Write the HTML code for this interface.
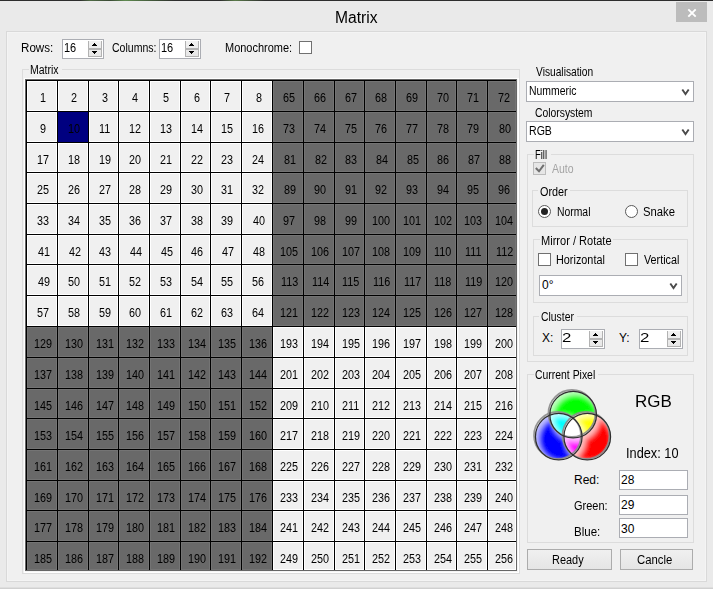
<!DOCTYPE html>
<html><head><meta charset="utf-8"><style>
html,body{margin:0;padding:0;}
body{width:713px;height:589px;overflow:hidden;position:relative;background:#eaeaea;font-family:"Liberation Sans",sans-serif;}
body>div{position:absolute;}
.t{position:absolute;white-space:nowrap;transform-origin:0 0;}
.c{position:absolute;box-sizing:border-box;}
</style></head><body>
<div style="left:0px;top:0px;width:713px;height:1px;background:linear-gradient(90deg,#2e2e2e 0,#2e2e2e 80px,#4f6a45 90px,#3a4a35 110px,#5f8a50 125px,#3a4a35 160px,#2e2e2e 175px,#2e2e2e 220px,#5a7a4a 235px,#2e2e2e 265px,#2e2e2e 100%)"></div><div style="left:676px;top:2px;width:31px;height:20px;background:#bcbcbc"></div><div style="left:6px;top:31px;width:701px;height:551px;border:1px solid #d9d9d9;box-sizing:border-box;background:#f0f0f0;"></div><div style="left:7px;top:32px;width:699px;height:549px;border:1px solid #f4f4f4;box-sizing:border-box;"></div><div style="left:0px;top:588px;width:713px;height:1px;background:#d0d0d0"></div><div style="left:0px;top:587px;width:713px;height:1px;background:#dedede"></div><div style="left:62px;top:39px;width:42px;height:20px;border:1px solid #abadb3;box-sizing:border-box;background:#fff;"></div><div style="left:88px;top:41px;width:14px;height:16px;background:linear-gradient(#f2f2f2,#e6e6e6);border:1px solid #b2b2b2;border-top:none;box-sizing:border-box"></div><div style="left:88px;top:48px;width:14px;height:2px;background:#b4b4b4"></div><div style="left:94px;top:43px;width:1px;height:1px;background:#000"></div><div style="left:93px;top:44px;width:3px;height:1px;background:#000"></div><div style="left:92px;top:45px;width:5px;height:1px;background:#000"></div><div style="left:92px;top:51px;width:5px;height:1px;background:#000"></div><div style="left:93px;top:52px;width:3px;height:1px;background:#000"></div><div style="left:94px;top:53px;width:1px;height:1px;background:#000"></div><div style="left:159px;top:39px;width:42px;height:20px;border:1px solid #abadb3;box-sizing:border-box;background:#fff;"></div><div style="left:185px;top:41px;width:14px;height:16px;background:linear-gradient(#f2f2f2,#e6e6e6);border:1px solid #b2b2b2;border-top:none;box-sizing:border-box"></div><div style="left:185px;top:48px;width:14px;height:2px;background:#b4b4b4"></div><div style="left:191px;top:43px;width:1px;height:1px;background:#000"></div><div style="left:190px;top:44px;width:3px;height:1px;background:#000"></div><div style="left:189px;top:45px;width:5px;height:1px;background:#000"></div><div style="left:189px;top:51px;width:5px;height:1px;background:#000"></div><div style="left:190px;top:52px;width:3px;height:1px;background:#000"></div><div style="left:191px;top:53px;width:1px;height:1px;background:#000"></div><div style="left:299px;top:41px;width:13px;height:13px;border:1px solid #707070;box-sizing:border-box;background:#fff;"></div><div style="left:22px;top:69px;width:498px;height:505px;border:1px solid #dcdcdc;box-sizing:border-box;"></div><div style="left:29px;top:69px;width:33px;height:1px;background:#f0f0f0"></div><div style="left:24px;top:78px;width:495px;height:495px;background:#fff"></div><div style="left:517px;top:79px;width:1px;height:493px;background:#f4f4f4"></div><div style="left:25px;top:571px;width:493px;height:1px;background:#f4f4f4"></div><div style="left:25px;top:79px;width:492px;height:492px;overflow:hidden"><div class="c" style="left:2px;top:2px;width:30px;height:30px;background:#f0f0f0;border:1px solid #ffffff"></div><span class="t" style="left:15.35px;top:13.00px;font-size:12px;line-height:12px;transform:scaleX(0.9)">1</span><div class="c" style="left:33px;top:2px;width:30px;height:30px;background:#f0f0f0;border:1px solid #ffffff"></div><span class="t" style="left:46.35px;top:13.00px;font-size:12px;line-height:12px;transform:scaleX(0.9)">2</span><div class="c" style="left:64px;top:2px;width:29px;height:30px;background:#f0f0f0;border:1px solid #ffffff"></div><span class="t" style="left:76.85px;top:13.00px;font-size:12px;line-height:12px;transform:scaleX(0.9)">3</span><div class="c" style="left:94px;top:2px;width:30px;height:30px;background:#f0f0f0;border:1px solid #ffffff"></div><span class="t" style="left:107.35px;top:13.00px;font-size:12px;line-height:12px;transform:scaleX(0.9)">4</span><div class="c" style="left:125px;top:2px;width:30px;height:30px;background:#f0f0f0;border:1px solid #ffffff"></div><span class="t" style="left:138.35px;top:13.00px;font-size:12px;line-height:12px;transform:scaleX(0.9)">5</span><div class="c" style="left:156px;top:2px;width:29px;height:30px;background:#f0f0f0;border:1px solid #ffffff"></div><span class="t" style="left:168.85px;top:13.00px;font-size:12px;line-height:12px;transform:scaleX(0.9)">6</span><div class="c" style="left:186px;top:2px;width:30px;height:30px;background:#f0f0f0;border:1px solid #ffffff"></div><span class="t" style="left:199.35px;top:13.00px;font-size:12px;line-height:12px;transform:scaleX(0.9)">7</span><div class="c" style="left:217px;top:2px;width:30px;height:30px;background:#f0f0f0;border:1px solid #ffffff"></div><span class="t" style="left:230.80px;top:13.00px;font-size:12px;line-height:12px;transform:scaleX(0.9)">8</span><div class="c" style="left:248px;top:2px;width:30px;height:30px;background:#696969;border:1px solid #747474"></div><span class="t" style="left:258.20px;top:13.00px;font-size:12px;line-height:12px;transform:scaleX(0.9)">65</span><div class="c" style="left:279px;top:2px;width:30px;height:30px;background:#696969;border:1px solid #747474"></div><span class="t" style="left:289.20px;top:13.00px;font-size:12px;line-height:12px;transform:scaleX(0.9)">66</span><div class="c" style="left:310px;top:2px;width:29px;height:30px;background:#696969;border:1px solid #747474"></div><span class="t" style="left:319.70px;top:13.00px;font-size:12px;line-height:12px;transform:scaleX(0.9)">67</span><div class="c" style="left:340px;top:2px;width:30px;height:30px;background:#696969;border:1px solid #747474"></div><span class="t" style="left:350.20px;top:13.00px;font-size:12px;line-height:12px;transform:scaleX(0.9)">68</span><div class="c" style="left:371px;top:2px;width:30px;height:30px;background:#696969;border:1px solid #747474"></div><span class="t" style="left:381.20px;top:13.00px;font-size:12px;line-height:12px;transform:scaleX(0.9)">69</span><div class="c" style="left:402px;top:2px;width:29px;height:30px;background:#696969;border:1px solid #747474"></div><span class="t" style="left:411.70px;top:13.00px;font-size:12px;line-height:12px;transform:scaleX(0.9)">70</span><div class="c" style="left:432px;top:2px;width:30px;height:30px;background:#696969;border:1px solid #747474"></div><span class="t" style="left:442.20px;top:13.00px;font-size:12px;line-height:12px;transform:scaleX(0.9)">71</span><div class="c" style="left:463px;top:2px;width:28px;height:30px;background:#696969;border:1px solid #747474"></div><span class="t" style="left:473.20px;top:13.00px;font-size:12px;line-height:12px;transform:scaleX(0.9)">72</span><div class="c" style="left:2px;top:33px;width:30px;height:30px;background:#f0f0f0;border:1px solid #ffffff"></div><span class="t" style="left:15.35px;top:44.00px;font-size:12px;line-height:12px;transform:scaleX(0.9)">9</span><div class="c" style="left:33px;top:33px;width:30px;height:30px;background:#000080;border:1px solid #000080"></div><span class="t" style="left:43.20px;top:44.00px;font-size:12px;line-height:12px;transform:scaleX(0.9)">10</span><div class="c" style="left:64px;top:33px;width:29px;height:30px;background:#f0f0f0;border:1px solid #ffffff"></div><span class="t" style="left:74.15px;top:44.00px;font-size:12px;line-height:12px;transform:scaleX(0.9)">11</span><div class="c" style="left:94px;top:33px;width:30px;height:30px;background:#f0f0f0;border:1px solid #ffffff"></div><span class="t" style="left:104.20px;top:44.00px;font-size:12px;line-height:12px;transform:scaleX(0.9)">12</span><div class="c" style="left:125px;top:33px;width:30px;height:30px;background:#f0f0f0;border:1px solid #ffffff"></div><span class="t" style="left:135.20px;top:44.00px;font-size:12px;line-height:12px;transform:scaleX(0.9)">13</span><div class="c" style="left:156px;top:33px;width:29px;height:30px;background:#f0f0f0;border:1px solid #ffffff"></div><span class="t" style="left:165.70px;top:44.00px;font-size:12px;line-height:12px;transform:scaleX(0.9)">14</span><div class="c" style="left:186px;top:33px;width:30px;height:30px;background:#f0f0f0;border:1px solid #ffffff"></div><span class="t" style="left:196.20px;top:44.00px;font-size:12px;line-height:12px;transform:scaleX(0.9)">15</span><div class="c" style="left:217px;top:33px;width:30px;height:30px;background:#f0f0f0;border:1px solid #ffffff"></div><span class="t" style="left:227.20px;top:44.00px;font-size:12px;line-height:12px;transform:scaleX(0.9)">16</span><div class="c" style="left:248px;top:33px;width:30px;height:30px;background:#696969;border:1px solid #747474"></div><span class="t" style="left:258.20px;top:44.00px;font-size:12px;line-height:12px;transform:scaleX(0.9)">73</span><div class="c" style="left:279px;top:33px;width:30px;height:30px;background:#696969;border:1px solid #747474"></div><span class="t" style="left:289.20px;top:44.00px;font-size:12px;line-height:12px;transform:scaleX(0.9)">74</span><div class="c" style="left:310px;top:33px;width:29px;height:30px;background:#696969;border:1px solid #747474"></div><span class="t" style="left:319.70px;top:44.00px;font-size:12px;line-height:12px;transform:scaleX(0.9)">75</span><div class="c" style="left:340px;top:33px;width:30px;height:30px;background:#696969;border:1px solid #747474"></div><span class="t" style="left:350.20px;top:44.00px;font-size:12px;line-height:12px;transform:scaleX(0.9)">76</span><div class="c" style="left:371px;top:33px;width:30px;height:30px;background:#696969;border:1px solid #747474"></div><span class="t" style="left:381.20px;top:44.00px;font-size:12px;line-height:12px;transform:scaleX(0.9)">77</span><div class="c" style="left:402px;top:33px;width:29px;height:30px;background:#696969;border:1px solid #747474"></div><span class="t" style="left:411.70px;top:44.00px;font-size:12px;line-height:12px;transform:scaleX(0.9)">78</span><div class="c" style="left:432px;top:33px;width:30px;height:30px;background:#696969;border:1px solid #747474"></div><span class="t" style="left:442.20px;top:44.00px;font-size:12px;line-height:12px;transform:scaleX(0.9)">79</span><div class="c" style="left:463px;top:33px;width:28px;height:30px;background:#696969;border:1px solid #747474"></div><span class="t" style="left:473.65px;top:44.00px;font-size:12px;line-height:12px;transform:scaleX(0.9)">80</span><div class="c" style="left:2px;top:64px;width:30px;height:29px;background:#f0f0f0;border:1px solid #ffffff"></div><span class="t" style="left:12.20px;top:74.50px;font-size:12px;line-height:12px;transform:scaleX(0.9)">17</span><div class="c" style="left:33px;top:64px;width:30px;height:29px;background:#f0f0f0;border:1px solid #ffffff"></div><span class="t" style="left:43.20px;top:74.50px;font-size:12px;line-height:12px;transform:scaleX(0.9)">18</span><div class="c" style="left:64px;top:64px;width:29px;height:29px;background:#f0f0f0;border:1px solid #ffffff"></div><span class="t" style="left:73.70px;top:74.50px;font-size:12px;line-height:12px;transform:scaleX(0.9)">19</span><div class="c" style="left:94px;top:64px;width:30px;height:29px;background:#f0f0f0;border:1px solid #ffffff"></div><span class="t" style="left:104.20px;top:74.50px;font-size:12px;line-height:12px;transform:scaleX(0.9)">20</span><div class="c" style="left:125px;top:64px;width:30px;height:29px;background:#f0f0f0;border:1px solid #ffffff"></div><span class="t" style="left:135.20px;top:74.50px;font-size:12px;line-height:12px;transform:scaleX(0.9)">21</span><div class="c" style="left:156px;top:64px;width:29px;height:29px;background:#f0f0f0;border:1px solid #ffffff"></div><span class="t" style="left:165.70px;top:74.50px;font-size:12px;line-height:12px;transform:scaleX(0.9)">22</span><div class="c" style="left:186px;top:64px;width:30px;height:29px;background:#f0f0f0;border:1px solid #ffffff"></div><span class="t" style="left:196.20px;top:74.50px;font-size:12px;line-height:12px;transform:scaleX(0.9)">23</span><div class="c" style="left:217px;top:64px;width:30px;height:29px;background:#f0f0f0;border:1px solid #ffffff"></div><span class="t" style="left:227.20px;top:74.50px;font-size:12px;line-height:12px;transform:scaleX(0.9)">24</span><div class="c" style="left:248px;top:64px;width:30px;height:29px;background:#696969;border:1px solid #747474"></div><span class="t" style="left:258.65px;top:74.50px;font-size:12px;line-height:12px;transform:scaleX(0.9)">81</span><div class="c" style="left:279px;top:64px;width:30px;height:29px;background:#696969;border:1px solid #747474"></div><span class="t" style="left:289.65px;top:74.50px;font-size:12px;line-height:12px;transform:scaleX(0.9)">82</span><div class="c" style="left:310px;top:64px;width:29px;height:29px;background:#696969;border:1px solid #747474"></div><span class="t" style="left:320.15px;top:74.50px;font-size:12px;line-height:12px;transform:scaleX(0.9)">83</span><div class="c" style="left:340px;top:64px;width:30px;height:29px;background:#696969;border:1px solid #747474"></div><span class="t" style="left:350.65px;top:74.50px;font-size:12px;line-height:12px;transform:scaleX(0.9)">84</span><div class="c" style="left:371px;top:64px;width:30px;height:29px;background:#696969;border:1px solid #747474"></div><span class="t" style="left:381.65px;top:74.50px;font-size:12px;line-height:12px;transform:scaleX(0.9)">85</span><div class="c" style="left:402px;top:64px;width:29px;height:29px;background:#696969;border:1px solid #747474"></div><span class="t" style="left:412.15px;top:74.50px;font-size:12px;line-height:12px;transform:scaleX(0.9)">86</span><div class="c" style="left:432px;top:64px;width:30px;height:29px;background:#696969;border:1px solid #747474"></div><span class="t" style="left:442.65px;top:74.50px;font-size:12px;line-height:12px;transform:scaleX(0.9)">87</span><div class="c" style="left:463px;top:64px;width:28px;height:29px;background:#696969;border:1px solid #747474"></div><span class="t" style="left:473.65px;top:74.50px;font-size:12px;line-height:12px;transform:scaleX(0.9)">88</span><div class="c" style="left:2px;top:94px;width:30px;height:30px;background:#f0f0f0;border:1px solid #ffffff"></div><span class="t" style="left:12.20px;top:105.00px;font-size:12px;line-height:12px;transform:scaleX(0.9)">25</span><div class="c" style="left:33px;top:94px;width:30px;height:30px;background:#f0f0f0;border:1px solid #ffffff"></div><span class="t" style="left:43.20px;top:105.00px;font-size:12px;line-height:12px;transform:scaleX(0.9)">26</span><div class="c" style="left:64px;top:94px;width:29px;height:30px;background:#f0f0f0;border:1px solid #ffffff"></div><span class="t" style="left:73.70px;top:105.00px;font-size:12px;line-height:12px;transform:scaleX(0.9)">27</span><div class="c" style="left:94px;top:94px;width:30px;height:30px;background:#f0f0f0;border:1px solid #ffffff"></div><span class="t" style="left:104.20px;top:105.00px;font-size:12px;line-height:12px;transform:scaleX(0.9)">28</span><div class="c" style="left:125px;top:94px;width:30px;height:30px;background:#f0f0f0;border:1px solid #ffffff"></div><span class="t" style="left:135.20px;top:105.00px;font-size:12px;line-height:12px;transform:scaleX(0.9)">29</span><div class="c" style="left:156px;top:94px;width:29px;height:30px;background:#f0f0f0;border:1px solid #ffffff"></div><span class="t" style="left:165.70px;top:105.00px;font-size:12px;line-height:12px;transform:scaleX(0.9)">30</span><div class="c" style="left:186px;top:94px;width:30px;height:30px;background:#f0f0f0;border:1px solid #ffffff"></div><span class="t" style="left:196.20px;top:105.00px;font-size:12px;line-height:12px;transform:scaleX(0.9)">31</span><div class="c" style="left:217px;top:94px;width:30px;height:30px;background:#f0f0f0;border:1px solid #ffffff"></div><span class="t" style="left:227.20px;top:105.00px;font-size:12px;line-height:12px;transform:scaleX(0.9)">32</span><div class="c" style="left:248px;top:94px;width:30px;height:30px;background:#696969;border:1px solid #747474"></div><span class="t" style="left:258.65px;top:105.00px;font-size:12px;line-height:12px;transform:scaleX(0.9)">89</span><div class="c" style="left:279px;top:94px;width:30px;height:30px;background:#696969;border:1px solid #747474"></div><span class="t" style="left:289.20px;top:105.00px;font-size:12px;line-height:12px;transform:scaleX(0.9)">90</span><div class="c" style="left:310px;top:94px;width:29px;height:30px;background:#696969;border:1px solid #747474"></div><span class="t" style="left:319.70px;top:105.00px;font-size:12px;line-height:12px;transform:scaleX(0.9)">91</span><div class="c" style="left:340px;top:94px;width:30px;height:30px;background:#696969;border:1px solid #747474"></div><span class="t" style="left:350.20px;top:105.00px;font-size:12px;line-height:12px;transform:scaleX(0.9)">92</span><div class="c" style="left:371px;top:94px;width:30px;height:30px;background:#696969;border:1px solid #747474"></div><span class="t" style="left:381.20px;top:105.00px;font-size:12px;line-height:12px;transform:scaleX(0.9)">93</span><div class="c" style="left:402px;top:94px;width:29px;height:30px;background:#696969;border:1px solid #747474"></div><span class="t" style="left:411.70px;top:105.00px;font-size:12px;line-height:12px;transform:scaleX(0.9)">94</span><div class="c" style="left:432px;top:94px;width:30px;height:30px;background:#696969;border:1px solid #747474"></div><span class="t" style="left:442.20px;top:105.00px;font-size:12px;line-height:12px;transform:scaleX(0.9)">95</span><div class="c" style="left:463px;top:94px;width:28px;height:30px;background:#696969;border:1px solid #747474"></div><span class="t" style="left:473.20px;top:105.00px;font-size:12px;line-height:12px;transform:scaleX(0.9)">96</span><div class="c" style="left:2px;top:125px;width:30px;height:30px;background:#f0f0f0;border:1px solid #ffffff"></div><span class="t" style="left:12.20px;top:136.00px;font-size:12px;line-height:12px;transform:scaleX(0.9)">33</span><div class="c" style="left:33px;top:125px;width:30px;height:30px;background:#f0f0f0;border:1px solid #ffffff"></div><span class="t" style="left:43.20px;top:136.00px;font-size:12px;line-height:12px;transform:scaleX(0.9)">34</span><div class="c" style="left:64px;top:125px;width:29px;height:30px;background:#f0f0f0;border:1px solid #ffffff"></div><span class="t" style="left:73.70px;top:136.00px;font-size:12px;line-height:12px;transform:scaleX(0.9)">35</span><div class="c" style="left:94px;top:125px;width:30px;height:30px;background:#f0f0f0;border:1px solid #ffffff"></div><span class="t" style="left:104.20px;top:136.00px;font-size:12px;line-height:12px;transform:scaleX(0.9)">36</span><div class="c" style="left:125px;top:125px;width:30px;height:30px;background:#f0f0f0;border:1px solid #ffffff"></div><span class="t" style="left:135.20px;top:136.00px;font-size:12px;line-height:12px;transform:scaleX(0.9)">37</span><div class="c" style="left:156px;top:125px;width:29px;height:30px;background:#f0f0f0;border:1px solid #ffffff"></div><span class="t" style="left:165.70px;top:136.00px;font-size:12px;line-height:12px;transform:scaleX(0.9)">38</span><div class="c" style="left:186px;top:125px;width:30px;height:30px;background:#f0f0f0;border:1px solid #ffffff"></div><span class="t" style="left:196.20px;top:136.00px;font-size:12px;line-height:12px;transform:scaleX(0.9)">39</span><div class="c" style="left:217px;top:125px;width:30px;height:30px;background:#f0f0f0;border:1px solid #ffffff"></div><span class="t" style="left:227.65px;top:136.00px;font-size:12px;line-height:12px;transform:scaleX(0.9)">40</span><div class="c" style="left:248px;top:125px;width:30px;height:30px;background:#696969;border:1px solid #747474"></div><span class="t" style="left:258.20px;top:136.00px;font-size:12px;line-height:12px;transform:scaleX(0.9)">97</span><div class="c" style="left:279px;top:125px;width:30px;height:30px;background:#696969;border:1px solid #747474"></div><span class="t" style="left:289.20px;top:136.00px;font-size:12px;line-height:12px;transform:scaleX(0.9)">98</span><div class="c" style="left:310px;top:125px;width:29px;height:30px;background:#696969;border:1px solid #747474"></div><span class="t" style="left:319.70px;top:136.00px;font-size:12px;line-height:12px;transform:scaleX(0.9)">99</span><div class="c" style="left:340px;top:125px;width:30px;height:30px;background:#696969;border:1px solid #747474"></div><span class="t" style="left:347.05px;top:136.00px;font-size:12px;line-height:12px;transform:scaleX(0.9)">100</span><div class="c" style="left:371px;top:125px;width:30px;height:30px;background:#696969;border:1px solid #747474"></div><span class="t" style="left:378.05px;top:136.00px;font-size:12px;line-height:12px;transform:scaleX(0.9)">101</span><div class="c" style="left:402px;top:125px;width:29px;height:30px;background:#696969;border:1px solid #747474"></div><span class="t" style="left:408.55px;top:136.00px;font-size:12px;line-height:12px;transform:scaleX(0.9)">102</span><div class="c" style="left:432px;top:125px;width:30px;height:30px;background:#696969;border:1px solid #747474"></div><span class="t" style="left:439.05px;top:136.00px;font-size:12px;line-height:12px;transform:scaleX(0.9)">103</span><div class="c" style="left:463px;top:125px;width:28px;height:30px;background:#696969;border:1px solid #747474"></div><span class="t" style="left:470.05px;top:136.00px;font-size:12px;line-height:12px;transform:scaleX(0.9)">104</span><div class="c" style="left:2px;top:156px;width:30px;height:29px;background:#f0f0f0;border:1px solid #ffffff"></div><span class="t" style="left:12.65px;top:166.50px;font-size:12px;line-height:12px;transform:scaleX(0.9)">41</span><div class="c" style="left:33px;top:156px;width:30px;height:29px;background:#f0f0f0;border:1px solid #ffffff"></div><span class="t" style="left:43.65px;top:166.50px;font-size:12px;line-height:12px;transform:scaleX(0.9)">42</span><div class="c" style="left:64px;top:156px;width:29px;height:29px;background:#f0f0f0;border:1px solid #ffffff"></div><span class="t" style="left:74.15px;top:166.50px;font-size:12px;line-height:12px;transform:scaleX(0.9)">43</span><div class="c" style="left:94px;top:156px;width:30px;height:29px;background:#f0f0f0;border:1px solid #ffffff"></div><span class="t" style="left:104.65px;top:166.50px;font-size:12px;line-height:12px;transform:scaleX(0.9)">44</span><div class="c" style="left:125px;top:156px;width:30px;height:29px;background:#f0f0f0;border:1px solid #ffffff"></div><span class="t" style="left:135.65px;top:166.50px;font-size:12px;line-height:12px;transform:scaleX(0.9)">45</span><div class="c" style="left:156px;top:156px;width:29px;height:29px;background:#f0f0f0;border:1px solid #ffffff"></div><span class="t" style="left:166.15px;top:166.50px;font-size:12px;line-height:12px;transform:scaleX(0.9)">46</span><div class="c" style="left:186px;top:156px;width:30px;height:29px;background:#f0f0f0;border:1px solid #ffffff"></div><span class="t" style="left:196.65px;top:166.50px;font-size:12px;line-height:12px;transform:scaleX(0.9)">47</span><div class="c" style="left:217px;top:156px;width:30px;height:29px;background:#f0f0f0;border:1px solid #ffffff"></div><span class="t" style="left:227.65px;top:166.50px;font-size:12px;line-height:12px;transform:scaleX(0.9)">48</span><div class="c" style="left:248px;top:156px;width:30px;height:29px;background:#696969;border:1px solid #747474"></div><span class="t" style="left:255.05px;top:166.50px;font-size:12px;line-height:12px;transform:scaleX(0.9)">105</span><div class="c" style="left:279px;top:156px;width:30px;height:29px;background:#696969;border:1px solid #747474"></div><span class="t" style="left:286.05px;top:166.50px;font-size:12px;line-height:12px;transform:scaleX(0.9)">106</span><div class="c" style="left:310px;top:156px;width:29px;height:29px;background:#696969;border:1px solid #747474"></div><span class="t" style="left:316.55px;top:166.50px;font-size:12px;line-height:12px;transform:scaleX(0.9)">107</span><div class="c" style="left:340px;top:156px;width:30px;height:29px;background:#696969;border:1px solid #747474"></div><span class="t" style="left:347.05px;top:166.50px;font-size:12px;line-height:12px;transform:scaleX(0.9)">108</span><div class="c" style="left:371px;top:156px;width:30px;height:29px;background:#696969;border:1px solid #747474"></div><span class="t" style="left:378.05px;top:166.50px;font-size:12px;line-height:12px;transform:scaleX(0.9)">109</span><div class="c" style="left:402px;top:156px;width:29px;height:29px;background:#696969;border:1px solid #747474"></div><span class="t" style="left:409.00px;top:166.50px;font-size:12px;line-height:12px;transform:scaleX(0.9)">110</span><div class="c" style="left:432px;top:156px;width:30px;height:29px;background:#696969;border:1px solid #747474"></div><span class="t" style="left:439.95px;top:166.50px;font-size:12px;line-height:12px;transform:scaleX(0.9)">111</span><div class="c" style="left:463px;top:156px;width:28px;height:29px;background:#696969;border:1px solid #747474"></div><span class="t" style="left:470.50px;top:166.50px;font-size:12px;line-height:12px;transform:scaleX(0.9)">112</span><div class="c" style="left:2px;top:186px;width:30px;height:30px;background:#f0f0f0;border:1px solid #ffffff"></div><span class="t" style="left:12.65px;top:197.00px;font-size:12px;line-height:12px;transform:scaleX(0.9)">49</span><div class="c" style="left:33px;top:186px;width:30px;height:30px;background:#f0f0f0;border:1px solid #ffffff"></div><span class="t" style="left:43.20px;top:197.00px;font-size:12px;line-height:12px;transform:scaleX(0.9)">50</span><div class="c" style="left:64px;top:186px;width:29px;height:30px;background:#f0f0f0;border:1px solid #ffffff"></div><span class="t" style="left:73.70px;top:197.00px;font-size:12px;line-height:12px;transform:scaleX(0.9)">51</span><div class="c" style="left:94px;top:186px;width:30px;height:30px;background:#f0f0f0;border:1px solid #ffffff"></div><span class="t" style="left:104.20px;top:197.00px;font-size:12px;line-height:12px;transform:scaleX(0.9)">52</span><div class="c" style="left:125px;top:186px;width:30px;height:30px;background:#f0f0f0;border:1px solid #ffffff"></div><span class="t" style="left:135.20px;top:197.00px;font-size:12px;line-height:12px;transform:scaleX(0.9)">53</span><div class="c" style="left:156px;top:186px;width:29px;height:30px;background:#f0f0f0;border:1px solid #ffffff"></div><span class="t" style="left:165.70px;top:197.00px;font-size:12px;line-height:12px;transform:scaleX(0.9)">54</span><div class="c" style="left:186px;top:186px;width:30px;height:30px;background:#f0f0f0;border:1px solid #ffffff"></div><span class="t" style="left:196.20px;top:197.00px;font-size:12px;line-height:12px;transform:scaleX(0.9)">55</span><div class="c" style="left:217px;top:186px;width:30px;height:30px;background:#f0f0f0;border:1px solid #ffffff"></div><span class="t" style="left:227.20px;top:197.00px;font-size:12px;line-height:12px;transform:scaleX(0.9)">56</span><div class="c" style="left:248px;top:186px;width:30px;height:30px;background:#696969;border:1px solid #747474"></div><span class="t" style="left:255.50px;top:197.00px;font-size:12px;line-height:12px;transform:scaleX(0.9)">113</span><div class="c" style="left:279px;top:186px;width:30px;height:30px;background:#696969;border:1px solid #747474"></div><span class="t" style="left:286.50px;top:197.00px;font-size:12px;line-height:12px;transform:scaleX(0.9)">114</span><div class="c" style="left:310px;top:186px;width:29px;height:30px;background:#696969;border:1px solid #747474"></div><span class="t" style="left:317.00px;top:197.00px;font-size:12px;line-height:12px;transform:scaleX(0.9)">115</span><div class="c" style="left:340px;top:186px;width:30px;height:30px;background:#696969;border:1px solid #747474"></div><span class="t" style="left:347.50px;top:197.00px;font-size:12px;line-height:12px;transform:scaleX(0.9)">116</span><div class="c" style="left:371px;top:186px;width:30px;height:30px;background:#696969;border:1px solid #747474"></div><span class="t" style="left:378.50px;top:197.00px;font-size:12px;line-height:12px;transform:scaleX(0.9)">117</span><div class="c" style="left:402px;top:186px;width:29px;height:30px;background:#696969;border:1px solid #747474"></div><span class="t" style="left:409.00px;top:197.00px;font-size:12px;line-height:12px;transform:scaleX(0.9)">118</span><div class="c" style="left:432px;top:186px;width:30px;height:30px;background:#696969;border:1px solid #747474"></div><span class="t" style="left:439.50px;top:197.00px;font-size:12px;line-height:12px;transform:scaleX(0.9)">119</span><div class="c" style="left:463px;top:186px;width:28px;height:30px;background:#696969;border:1px solid #747474"></div><span class="t" style="left:470.05px;top:197.00px;font-size:12px;line-height:12px;transform:scaleX(0.9)">120</span><div class="c" style="left:2px;top:217px;width:30px;height:30px;background:#f0f0f0;border:1px solid #ffffff"></div><span class="t" style="left:12.20px;top:228.00px;font-size:12px;line-height:12px;transform:scaleX(0.9)">57</span><div class="c" style="left:33px;top:217px;width:30px;height:30px;background:#f0f0f0;border:1px solid #ffffff"></div><span class="t" style="left:43.20px;top:228.00px;font-size:12px;line-height:12px;transform:scaleX(0.9)">58</span><div class="c" style="left:64px;top:217px;width:29px;height:30px;background:#f0f0f0;border:1px solid #ffffff"></div><span class="t" style="left:73.70px;top:228.00px;font-size:12px;line-height:12px;transform:scaleX(0.9)">59</span><div class="c" style="left:94px;top:217px;width:30px;height:30px;background:#f0f0f0;border:1px solid #ffffff"></div><span class="t" style="left:104.20px;top:228.00px;font-size:12px;line-height:12px;transform:scaleX(0.9)">60</span><div class="c" style="left:125px;top:217px;width:30px;height:30px;background:#f0f0f0;border:1px solid #ffffff"></div><span class="t" style="left:135.20px;top:228.00px;font-size:12px;line-height:12px;transform:scaleX(0.9)">61</span><div class="c" style="left:156px;top:217px;width:29px;height:30px;background:#f0f0f0;border:1px solid #ffffff"></div><span class="t" style="left:165.70px;top:228.00px;font-size:12px;line-height:12px;transform:scaleX(0.9)">62</span><div class="c" style="left:186px;top:217px;width:30px;height:30px;background:#f0f0f0;border:1px solid #ffffff"></div><span class="t" style="left:196.20px;top:228.00px;font-size:12px;line-height:12px;transform:scaleX(0.9)">63</span><div class="c" style="left:217px;top:217px;width:30px;height:30px;background:#f0f0f0;border:1px solid #ffffff"></div><span class="t" style="left:227.20px;top:228.00px;font-size:12px;line-height:12px;transform:scaleX(0.9)">64</span><div class="c" style="left:248px;top:217px;width:30px;height:30px;background:#696969;border:1px solid #747474"></div><span class="t" style="left:255.05px;top:228.00px;font-size:12px;line-height:12px;transform:scaleX(0.9)">121</span><div class="c" style="left:279px;top:217px;width:30px;height:30px;background:#696969;border:1px solid #747474"></div><span class="t" style="left:286.05px;top:228.00px;font-size:12px;line-height:12px;transform:scaleX(0.9)">122</span><div class="c" style="left:310px;top:217px;width:29px;height:30px;background:#696969;border:1px solid #747474"></div><span class="t" style="left:316.55px;top:228.00px;font-size:12px;line-height:12px;transform:scaleX(0.9)">123</span><div class="c" style="left:340px;top:217px;width:30px;height:30px;background:#696969;border:1px solid #747474"></div><span class="t" style="left:347.05px;top:228.00px;font-size:12px;line-height:12px;transform:scaleX(0.9)">124</span><div class="c" style="left:371px;top:217px;width:30px;height:30px;background:#696969;border:1px solid #747474"></div><span class="t" style="left:378.05px;top:228.00px;font-size:12px;line-height:12px;transform:scaleX(0.9)">125</span><div class="c" style="left:402px;top:217px;width:29px;height:30px;background:#696969;border:1px solid #747474"></div><span class="t" style="left:408.55px;top:228.00px;font-size:12px;line-height:12px;transform:scaleX(0.9)">126</span><div class="c" style="left:432px;top:217px;width:30px;height:30px;background:#696969;border:1px solid #747474"></div><span class="t" style="left:439.05px;top:228.00px;font-size:12px;line-height:12px;transform:scaleX(0.9)">127</span><div class="c" style="left:463px;top:217px;width:28px;height:30px;background:#696969;border:1px solid #747474"></div><span class="t" style="left:470.05px;top:228.00px;font-size:12px;line-height:12px;transform:scaleX(0.9)">128</span><div class="c" style="left:2px;top:248px;width:30px;height:30px;background:#696969;border:1px solid #747474"></div><span class="t" style="left:9.05px;top:259.00px;font-size:12px;line-height:12px;transform:scaleX(0.9)">129</span><div class="c" style="left:33px;top:248px;width:30px;height:30px;background:#696969;border:1px solid #747474"></div><span class="t" style="left:40.05px;top:259.00px;font-size:12px;line-height:12px;transform:scaleX(0.9)">130</span><div class="c" style="left:64px;top:248px;width:29px;height:30px;background:#696969;border:1px solid #747474"></div><span class="t" style="left:70.55px;top:259.00px;font-size:12px;line-height:12px;transform:scaleX(0.9)">131</span><div class="c" style="left:94px;top:248px;width:30px;height:30px;background:#696969;border:1px solid #747474"></div><span class="t" style="left:101.05px;top:259.00px;font-size:12px;line-height:12px;transform:scaleX(0.9)">132</span><div class="c" style="left:125px;top:248px;width:30px;height:30px;background:#696969;border:1px solid #747474"></div><span class="t" style="left:132.05px;top:259.00px;font-size:12px;line-height:12px;transform:scaleX(0.9)">133</span><div class="c" style="left:156px;top:248px;width:29px;height:30px;background:#696969;border:1px solid #747474"></div><span class="t" style="left:162.55px;top:259.00px;font-size:12px;line-height:12px;transform:scaleX(0.9)">134</span><div class="c" style="left:186px;top:248px;width:30px;height:30px;background:#696969;border:1px solid #747474"></div><span class="t" style="left:193.05px;top:259.00px;font-size:12px;line-height:12px;transform:scaleX(0.9)">135</span><div class="c" style="left:217px;top:248px;width:30px;height:30px;background:#696969;border:1px solid #747474"></div><span class="t" style="left:224.05px;top:259.00px;font-size:12px;line-height:12px;transform:scaleX(0.9)">136</span><div class="c" style="left:248px;top:248px;width:30px;height:30px;background:#f0f0f0;border:1px solid #ffffff"></div><span class="t" style="left:255.05px;top:259.00px;font-size:12px;line-height:12px;transform:scaleX(0.9)">193</span><div class="c" style="left:279px;top:248px;width:30px;height:30px;background:#f0f0f0;border:1px solid #ffffff"></div><span class="t" style="left:286.05px;top:259.00px;font-size:12px;line-height:12px;transform:scaleX(0.9)">194</span><div class="c" style="left:310px;top:248px;width:29px;height:30px;background:#f0f0f0;border:1px solid #ffffff"></div><span class="t" style="left:316.55px;top:259.00px;font-size:12px;line-height:12px;transform:scaleX(0.9)">195</span><div class="c" style="left:340px;top:248px;width:30px;height:30px;background:#f0f0f0;border:1px solid #ffffff"></div><span class="t" style="left:347.05px;top:259.00px;font-size:12px;line-height:12px;transform:scaleX(0.9)">196</span><div class="c" style="left:371px;top:248px;width:30px;height:30px;background:#f0f0f0;border:1px solid #ffffff"></div><span class="t" style="left:378.05px;top:259.00px;font-size:12px;line-height:12px;transform:scaleX(0.9)">197</span><div class="c" style="left:402px;top:248px;width:29px;height:30px;background:#f0f0f0;border:1px solid #ffffff"></div><span class="t" style="left:408.55px;top:259.00px;font-size:12px;line-height:12px;transform:scaleX(0.9)">198</span><div class="c" style="left:432px;top:248px;width:30px;height:30px;background:#f0f0f0;border:1px solid #ffffff"></div><span class="t" style="left:439.05px;top:259.00px;font-size:12px;line-height:12px;transform:scaleX(0.9)">199</span><div class="c" style="left:463px;top:248px;width:28px;height:30px;background:#f0f0f0;border:1px solid #ffffff"></div><span class="t" style="left:470.05px;top:259.00px;font-size:12px;line-height:12px;transform:scaleX(0.9)">200</span><div class="c" style="left:2px;top:279px;width:30px;height:30px;background:#696969;border:1px solid #747474"></div><span class="t" style="left:9.05px;top:290.00px;font-size:12px;line-height:12px;transform:scaleX(0.9)">137</span><div class="c" style="left:33px;top:279px;width:30px;height:30px;background:#696969;border:1px solid #747474"></div><span class="t" style="left:40.05px;top:290.00px;font-size:12px;line-height:12px;transform:scaleX(0.9)">138</span><div class="c" style="left:64px;top:279px;width:29px;height:30px;background:#696969;border:1px solid #747474"></div><span class="t" style="left:70.55px;top:290.00px;font-size:12px;line-height:12px;transform:scaleX(0.9)">139</span><div class="c" style="left:94px;top:279px;width:30px;height:30px;background:#696969;border:1px solid #747474"></div><span class="t" style="left:101.05px;top:290.00px;font-size:12px;line-height:12px;transform:scaleX(0.9)">140</span><div class="c" style="left:125px;top:279px;width:30px;height:30px;background:#696969;border:1px solid #747474"></div><span class="t" style="left:132.05px;top:290.00px;font-size:12px;line-height:12px;transform:scaleX(0.9)">141</span><div class="c" style="left:156px;top:279px;width:29px;height:30px;background:#696969;border:1px solid #747474"></div><span class="t" style="left:162.55px;top:290.00px;font-size:12px;line-height:12px;transform:scaleX(0.9)">142</span><div class="c" style="left:186px;top:279px;width:30px;height:30px;background:#696969;border:1px solid #747474"></div><span class="t" style="left:193.05px;top:290.00px;font-size:12px;line-height:12px;transform:scaleX(0.9)">143</span><div class="c" style="left:217px;top:279px;width:30px;height:30px;background:#696969;border:1px solid #747474"></div><span class="t" style="left:224.05px;top:290.00px;font-size:12px;line-height:12px;transform:scaleX(0.9)">144</span><div class="c" style="left:248px;top:279px;width:30px;height:30px;background:#f0f0f0;border:1px solid #ffffff"></div><span class="t" style="left:255.05px;top:290.00px;font-size:12px;line-height:12px;transform:scaleX(0.9)">201</span><div class="c" style="left:279px;top:279px;width:30px;height:30px;background:#f0f0f0;border:1px solid #ffffff"></div><span class="t" style="left:286.05px;top:290.00px;font-size:12px;line-height:12px;transform:scaleX(0.9)">202</span><div class="c" style="left:310px;top:279px;width:29px;height:30px;background:#f0f0f0;border:1px solid #ffffff"></div><span class="t" style="left:316.55px;top:290.00px;font-size:12px;line-height:12px;transform:scaleX(0.9)">203</span><div class="c" style="left:340px;top:279px;width:30px;height:30px;background:#f0f0f0;border:1px solid #ffffff"></div><span class="t" style="left:347.05px;top:290.00px;font-size:12px;line-height:12px;transform:scaleX(0.9)">204</span><div class="c" style="left:371px;top:279px;width:30px;height:30px;background:#f0f0f0;border:1px solid #ffffff"></div><span class="t" style="left:378.05px;top:290.00px;font-size:12px;line-height:12px;transform:scaleX(0.9)">205</span><div class="c" style="left:402px;top:279px;width:29px;height:30px;background:#f0f0f0;border:1px solid #ffffff"></div><span class="t" style="left:408.55px;top:290.00px;font-size:12px;line-height:12px;transform:scaleX(0.9)">206</span><div class="c" style="left:432px;top:279px;width:30px;height:30px;background:#f0f0f0;border:1px solid #ffffff"></div><span class="t" style="left:439.05px;top:290.00px;font-size:12px;line-height:12px;transform:scaleX(0.9)">207</span><div class="c" style="left:463px;top:279px;width:28px;height:30px;background:#f0f0f0;border:1px solid #ffffff"></div><span class="t" style="left:470.05px;top:290.00px;font-size:12px;line-height:12px;transform:scaleX(0.9)">208</span><div class="c" style="left:2px;top:310px;width:30px;height:29px;background:#696969;border:1px solid #747474"></div><span class="t" style="left:9.05px;top:320.50px;font-size:12px;line-height:12px;transform:scaleX(0.9)">145</span><div class="c" style="left:33px;top:310px;width:30px;height:29px;background:#696969;border:1px solid #747474"></div><span class="t" style="left:40.05px;top:320.50px;font-size:12px;line-height:12px;transform:scaleX(0.9)">146</span><div class="c" style="left:64px;top:310px;width:29px;height:29px;background:#696969;border:1px solid #747474"></div><span class="t" style="left:70.55px;top:320.50px;font-size:12px;line-height:12px;transform:scaleX(0.9)">147</span><div class="c" style="left:94px;top:310px;width:30px;height:29px;background:#696969;border:1px solid #747474"></div><span class="t" style="left:101.05px;top:320.50px;font-size:12px;line-height:12px;transform:scaleX(0.9)">148</span><div class="c" style="left:125px;top:310px;width:30px;height:29px;background:#696969;border:1px solid #747474"></div><span class="t" style="left:132.05px;top:320.50px;font-size:12px;line-height:12px;transform:scaleX(0.9)">149</span><div class="c" style="left:156px;top:310px;width:29px;height:29px;background:#696969;border:1px solid #747474"></div><span class="t" style="left:162.55px;top:320.50px;font-size:12px;line-height:12px;transform:scaleX(0.9)">150</span><div class="c" style="left:186px;top:310px;width:30px;height:29px;background:#696969;border:1px solid #747474"></div><span class="t" style="left:193.05px;top:320.50px;font-size:12px;line-height:12px;transform:scaleX(0.9)">151</span><div class="c" style="left:217px;top:310px;width:30px;height:29px;background:#696969;border:1px solid #747474"></div><span class="t" style="left:224.05px;top:320.50px;font-size:12px;line-height:12px;transform:scaleX(0.9)">152</span><div class="c" style="left:248px;top:310px;width:30px;height:29px;background:#f0f0f0;border:1px solid #ffffff"></div><span class="t" style="left:255.05px;top:320.50px;font-size:12px;line-height:12px;transform:scaleX(0.9)">209</span><div class="c" style="left:279px;top:310px;width:30px;height:29px;background:#f0f0f0;border:1px solid #ffffff"></div><span class="t" style="left:286.05px;top:320.50px;font-size:12px;line-height:12px;transform:scaleX(0.9)">210</span><div class="c" style="left:310px;top:310px;width:29px;height:29px;background:#f0f0f0;border:1px solid #ffffff"></div><span class="t" style="left:317.00px;top:320.50px;font-size:12px;line-height:12px;transform:scaleX(0.9)">211</span><div class="c" style="left:340px;top:310px;width:30px;height:29px;background:#f0f0f0;border:1px solid #ffffff"></div><span class="t" style="left:347.05px;top:320.50px;font-size:12px;line-height:12px;transform:scaleX(0.9)">212</span><div class="c" style="left:371px;top:310px;width:30px;height:29px;background:#f0f0f0;border:1px solid #ffffff"></div><span class="t" style="left:378.05px;top:320.50px;font-size:12px;line-height:12px;transform:scaleX(0.9)">213</span><div class="c" style="left:402px;top:310px;width:29px;height:29px;background:#f0f0f0;border:1px solid #ffffff"></div><span class="t" style="left:408.55px;top:320.50px;font-size:12px;line-height:12px;transform:scaleX(0.9)">214</span><div class="c" style="left:432px;top:310px;width:30px;height:29px;background:#f0f0f0;border:1px solid #ffffff"></div><span class="t" style="left:439.05px;top:320.50px;font-size:12px;line-height:12px;transform:scaleX(0.9)">215</span><div class="c" style="left:463px;top:310px;width:28px;height:29px;background:#f0f0f0;border:1px solid #ffffff"></div><span class="t" style="left:470.05px;top:320.50px;font-size:12px;line-height:12px;transform:scaleX(0.9)">216</span><div class="c" style="left:2px;top:340px;width:30px;height:30px;background:#696969;border:1px solid #747474"></div><span class="t" style="left:9.05px;top:351.00px;font-size:12px;line-height:12px;transform:scaleX(0.9)">153</span><div class="c" style="left:33px;top:340px;width:30px;height:30px;background:#696969;border:1px solid #747474"></div><span class="t" style="left:40.05px;top:351.00px;font-size:12px;line-height:12px;transform:scaleX(0.9)">154</span><div class="c" style="left:64px;top:340px;width:29px;height:30px;background:#696969;border:1px solid #747474"></div><span class="t" style="left:70.55px;top:351.00px;font-size:12px;line-height:12px;transform:scaleX(0.9)">155</span><div class="c" style="left:94px;top:340px;width:30px;height:30px;background:#696969;border:1px solid #747474"></div><span class="t" style="left:101.05px;top:351.00px;font-size:12px;line-height:12px;transform:scaleX(0.9)">156</span><div class="c" style="left:125px;top:340px;width:30px;height:30px;background:#696969;border:1px solid #747474"></div><span class="t" style="left:132.05px;top:351.00px;font-size:12px;line-height:12px;transform:scaleX(0.9)">157</span><div class="c" style="left:156px;top:340px;width:29px;height:30px;background:#696969;border:1px solid #747474"></div><span class="t" style="left:162.55px;top:351.00px;font-size:12px;line-height:12px;transform:scaleX(0.9)">158</span><div class="c" style="left:186px;top:340px;width:30px;height:30px;background:#696969;border:1px solid #747474"></div><span class="t" style="left:193.05px;top:351.00px;font-size:12px;line-height:12px;transform:scaleX(0.9)">159</span><div class="c" style="left:217px;top:340px;width:30px;height:30px;background:#696969;border:1px solid #747474"></div><span class="t" style="left:224.05px;top:351.00px;font-size:12px;line-height:12px;transform:scaleX(0.9)">160</span><div class="c" style="left:248px;top:340px;width:30px;height:30px;background:#f0f0f0;border:1px solid #ffffff"></div><span class="t" style="left:255.05px;top:351.00px;font-size:12px;line-height:12px;transform:scaleX(0.9)">217</span><div class="c" style="left:279px;top:340px;width:30px;height:30px;background:#f0f0f0;border:1px solid #ffffff"></div><span class="t" style="left:286.05px;top:351.00px;font-size:12px;line-height:12px;transform:scaleX(0.9)">218</span><div class="c" style="left:310px;top:340px;width:29px;height:30px;background:#f0f0f0;border:1px solid #ffffff"></div><span class="t" style="left:316.55px;top:351.00px;font-size:12px;line-height:12px;transform:scaleX(0.9)">219</span><div class="c" style="left:340px;top:340px;width:30px;height:30px;background:#f0f0f0;border:1px solid #ffffff"></div><span class="t" style="left:347.05px;top:351.00px;font-size:12px;line-height:12px;transform:scaleX(0.9)">220</span><div class="c" style="left:371px;top:340px;width:30px;height:30px;background:#f0f0f0;border:1px solid #ffffff"></div><span class="t" style="left:378.05px;top:351.00px;font-size:12px;line-height:12px;transform:scaleX(0.9)">221</span><div class="c" style="left:402px;top:340px;width:29px;height:30px;background:#f0f0f0;border:1px solid #ffffff"></div><span class="t" style="left:408.55px;top:351.00px;font-size:12px;line-height:12px;transform:scaleX(0.9)">222</span><div class="c" style="left:432px;top:340px;width:30px;height:30px;background:#f0f0f0;border:1px solid #ffffff"></div><span class="t" style="left:439.05px;top:351.00px;font-size:12px;line-height:12px;transform:scaleX(0.9)">223</span><div class="c" style="left:463px;top:340px;width:28px;height:30px;background:#f0f0f0;border:1px solid #ffffff"></div><span class="t" style="left:470.05px;top:351.00px;font-size:12px;line-height:12px;transform:scaleX(0.9)">224</span><div class="c" style="left:2px;top:371px;width:30px;height:30px;background:#696969;border:1px solid #747474"></div><span class="t" style="left:9.05px;top:382.00px;font-size:12px;line-height:12px;transform:scaleX(0.9)">161</span><div class="c" style="left:33px;top:371px;width:30px;height:30px;background:#696969;border:1px solid #747474"></div><span class="t" style="left:40.05px;top:382.00px;font-size:12px;line-height:12px;transform:scaleX(0.9)">162</span><div class="c" style="left:64px;top:371px;width:29px;height:30px;background:#696969;border:1px solid #747474"></div><span class="t" style="left:70.55px;top:382.00px;font-size:12px;line-height:12px;transform:scaleX(0.9)">163</span><div class="c" style="left:94px;top:371px;width:30px;height:30px;background:#696969;border:1px solid #747474"></div><span class="t" style="left:101.05px;top:382.00px;font-size:12px;line-height:12px;transform:scaleX(0.9)">164</span><div class="c" style="left:125px;top:371px;width:30px;height:30px;background:#696969;border:1px solid #747474"></div><span class="t" style="left:132.05px;top:382.00px;font-size:12px;line-height:12px;transform:scaleX(0.9)">165</span><div class="c" style="left:156px;top:371px;width:29px;height:30px;background:#696969;border:1px solid #747474"></div><span class="t" style="left:162.55px;top:382.00px;font-size:12px;line-height:12px;transform:scaleX(0.9)">166</span><div class="c" style="left:186px;top:371px;width:30px;height:30px;background:#696969;border:1px solid #747474"></div><span class="t" style="left:193.05px;top:382.00px;font-size:12px;line-height:12px;transform:scaleX(0.9)">167</span><div class="c" style="left:217px;top:371px;width:30px;height:30px;background:#696969;border:1px solid #747474"></div><span class="t" style="left:224.05px;top:382.00px;font-size:12px;line-height:12px;transform:scaleX(0.9)">168</span><div class="c" style="left:248px;top:371px;width:30px;height:30px;background:#f0f0f0;border:1px solid #ffffff"></div><span class="t" style="left:255.05px;top:382.00px;font-size:12px;line-height:12px;transform:scaleX(0.9)">225</span><div class="c" style="left:279px;top:371px;width:30px;height:30px;background:#f0f0f0;border:1px solid #ffffff"></div><span class="t" style="left:286.05px;top:382.00px;font-size:12px;line-height:12px;transform:scaleX(0.9)">226</span><div class="c" style="left:310px;top:371px;width:29px;height:30px;background:#f0f0f0;border:1px solid #ffffff"></div><span class="t" style="left:316.55px;top:382.00px;font-size:12px;line-height:12px;transform:scaleX(0.9)">227</span><div class="c" style="left:340px;top:371px;width:30px;height:30px;background:#f0f0f0;border:1px solid #ffffff"></div><span class="t" style="left:347.05px;top:382.00px;font-size:12px;line-height:12px;transform:scaleX(0.9)">228</span><div class="c" style="left:371px;top:371px;width:30px;height:30px;background:#f0f0f0;border:1px solid #ffffff"></div><span class="t" style="left:378.05px;top:382.00px;font-size:12px;line-height:12px;transform:scaleX(0.9)">229</span><div class="c" style="left:402px;top:371px;width:29px;height:30px;background:#f0f0f0;border:1px solid #ffffff"></div><span class="t" style="left:408.55px;top:382.00px;font-size:12px;line-height:12px;transform:scaleX(0.9)">230</span><div class="c" style="left:432px;top:371px;width:30px;height:30px;background:#f0f0f0;border:1px solid #ffffff"></div><span class="t" style="left:439.05px;top:382.00px;font-size:12px;line-height:12px;transform:scaleX(0.9)">231</span><div class="c" style="left:463px;top:371px;width:28px;height:30px;background:#f0f0f0;border:1px solid #ffffff"></div><span class="t" style="left:470.05px;top:382.00px;font-size:12px;line-height:12px;transform:scaleX(0.9)">232</span><div class="c" style="left:2px;top:402px;width:30px;height:29px;background:#696969;border:1px solid #747474"></div><span class="t" style="left:9.05px;top:412.50px;font-size:12px;line-height:12px;transform:scaleX(0.9)">169</span><div class="c" style="left:33px;top:402px;width:30px;height:29px;background:#696969;border:1px solid #747474"></div><span class="t" style="left:40.05px;top:412.50px;font-size:12px;line-height:12px;transform:scaleX(0.9)">170</span><div class="c" style="left:64px;top:402px;width:29px;height:29px;background:#696969;border:1px solid #747474"></div><span class="t" style="left:70.55px;top:412.50px;font-size:12px;line-height:12px;transform:scaleX(0.9)">171</span><div class="c" style="left:94px;top:402px;width:30px;height:29px;background:#696969;border:1px solid #747474"></div><span class="t" style="left:101.05px;top:412.50px;font-size:12px;line-height:12px;transform:scaleX(0.9)">172</span><div class="c" style="left:125px;top:402px;width:30px;height:29px;background:#696969;border:1px solid #747474"></div><span class="t" style="left:132.05px;top:412.50px;font-size:12px;line-height:12px;transform:scaleX(0.9)">173</span><div class="c" style="left:156px;top:402px;width:29px;height:29px;background:#696969;border:1px solid #747474"></div><span class="t" style="left:162.55px;top:412.50px;font-size:12px;line-height:12px;transform:scaleX(0.9)">174</span><div class="c" style="left:186px;top:402px;width:30px;height:29px;background:#696969;border:1px solid #747474"></div><span class="t" style="left:193.05px;top:412.50px;font-size:12px;line-height:12px;transform:scaleX(0.9)">175</span><div class="c" style="left:217px;top:402px;width:30px;height:29px;background:#696969;border:1px solid #747474"></div><span class="t" style="left:224.05px;top:412.50px;font-size:12px;line-height:12px;transform:scaleX(0.9)">176</span><div class="c" style="left:248px;top:402px;width:30px;height:29px;background:#f0f0f0;border:1px solid #ffffff"></div><span class="t" style="left:255.05px;top:412.50px;font-size:12px;line-height:12px;transform:scaleX(0.9)">233</span><div class="c" style="left:279px;top:402px;width:30px;height:29px;background:#f0f0f0;border:1px solid #ffffff"></div><span class="t" style="left:286.05px;top:412.50px;font-size:12px;line-height:12px;transform:scaleX(0.9)">234</span><div class="c" style="left:310px;top:402px;width:29px;height:29px;background:#f0f0f0;border:1px solid #ffffff"></div><span class="t" style="left:316.55px;top:412.50px;font-size:12px;line-height:12px;transform:scaleX(0.9)">235</span><div class="c" style="left:340px;top:402px;width:30px;height:29px;background:#f0f0f0;border:1px solid #ffffff"></div><span class="t" style="left:347.05px;top:412.50px;font-size:12px;line-height:12px;transform:scaleX(0.9)">236</span><div class="c" style="left:371px;top:402px;width:30px;height:29px;background:#f0f0f0;border:1px solid #ffffff"></div><span class="t" style="left:378.05px;top:412.50px;font-size:12px;line-height:12px;transform:scaleX(0.9)">237</span><div class="c" style="left:402px;top:402px;width:29px;height:29px;background:#f0f0f0;border:1px solid #ffffff"></div><span class="t" style="left:408.55px;top:412.50px;font-size:12px;line-height:12px;transform:scaleX(0.9)">238</span><div class="c" style="left:432px;top:402px;width:30px;height:29px;background:#f0f0f0;border:1px solid #ffffff"></div><span class="t" style="left:439.05px;top:412.50px;font-size:12px;line-height:12px;transform:scaleX(0.9)">239</span><div class="c" style="left:463px;top:402px;width:28px;height:29px;background:#f0f0f0;border:1px solid #ffffff"></div><span class="t" style="left:470.05px;top:412.50px;font-size:12px;line-height:12px;transform:scaleX(0.9)">240</span><div class="c" style="left:2px;top:432px;width:30px;height:30px;background:#696969;border:1px solid #747474"></div><span class="t" style="left:9.05px;top:443.00px;font-size:12px;line-height:12px;transform:scaleX(0.9)">177</span><div class="c" style="left:33px;top:432px;width:30px;height:30px;background:#696969;border:1px solid #747474"></div><span class="t" style="left:40.05px;top:443.00px;font-size:12px;line-height:12px;transform:scaleX(0.9)">178</span><div class="c" style="left:64px;top:432px;width:29px;height:30px;background:#696969;border:1px solid #747474"></div><span class="t" style="left:70.55px;top:443.00px;font-size:12px;line-height:12px;transform:scaleX(0.9)">179</span><div class="c" style="left:94px;top:432px;width:30px;height:30px;background:#696969;border:1px solid #747474"></div><span class="t" style="left:101.05px;top:443.00px;font-size:12px;line-height:12px;transform:scaleX(0.9)">180</span><div class="c" style="left:125px;top:432px;width:30px;height:30px;background:#696969;border:1px solid #747474"></div><span class="t" style="left:132.05px;top:443.00px;font-size:12px;line-height:12px;transform:scaleX(0.9)">181</span><div class="c" style="left:156px;top:432px;width:29px;height:30px;background:#696969;border:1px solid #747474"></div><span class="t" style="left:162.55px;top:443.00px;font-size:12px;line-height:12px;transform:scaleX(0.9)">182</span><div class="c" style="left:186px;top:432px;width:30px;height:30px;background:#696969;border:1px solid #747474"></div><span class="t" style="left:193.05px;top:443.00px;font-size:12px;line-height:12px;transform:scaleX(0.9)">183</span><div class="c" style="left:217px;top:432px;width:30px;height:30px;background:#696969;border:1px solid #747474"></div><span class="t" style="left:224.05px;top:443.00px;font-size:12px;line-height:12px;transform:scaleX(0.9)">184</span><div class="c" style="left:248px;top:432px;width:30px;height:30px;background:#f0f0f0;border:1px solid #ffffff"></div><span class="t" style="left:255.05px;top:443.00px;font-size:12px;line-height:12px;transform:scaleX(0.9)">241</span><div class="c" style="left:279px;top:432px;width:30px;height:30px;background:#f0f0f0;border:1px solid #ffffff"></div><span class="t" style="left:286.05px;top:443.00px;font-size:12px;line-height:12px;transform:scaleX(0.9)">242</span><div class="c" style="left:310px;top:432px;width:29px;height:30px;background:#f0f0f0;border:1px solid #ffffff"></div><span class="t" style="left:316.55px;top:443.00px;font-size:12px;line-height:12px;transform:scaleX(0.9)">243</span><div class="c" style="left:340px;top:432px;width:30px;height:30px;background:#f0f0f0;border:1px solid #ffffff"></div><span class="t" style="left:347.05px;top:443.00px;font-size:12px;line-height:12px;transform:scaleX(0.9)">244</span><div class="c" style="left:371px;top:432px;width:30px;height:30px;background:#f0f0f0;border:1px solid #ffffff"></div><span class="t" style="left:378.05px;top:443.00px;font-size:12px;line-height:12px;transform:scaleX(0.9)">245</span><div class="c" style="left:402px;top:432px;width:29px;height:30px;background:#f0f0f0;border:1px solid #ffffff"></div><span class="t" style="left:408.55px;top:443.00px;font-size:12px;line-height:12px;transform:scaleX(0.9)">246</span><div class="c" style="left:432px;top:432px;width:30px;height:30px;background:#f0f0f0;border:1px solid #ffffff"></div><span class="t" style="left:439.05px;top:443.00px;font-size:12px;line-height:12px;transform:scaleX(0.9)">247</span><div class="c" style="left:463px;top:432px;width:28px;height:30px;background:#f0f0f0;border:1px solid #ffffff"></div><span class="t" style="left:470.05px;top:443.00px;font-size:12px;line-height:12px;transform:scaleX(0.9)">248</span><div class="c" style="left:2px;top:463px;width:30px;height:28px;background:#696969;border:1px solid #747474"></div><span class="t" style="left:9.05px;top:474.00px;font-size:12px;line-height:12px;transform:scaleX(0.9)">185</span><div class="c" style="left:33px;top:463px;width:30px;height:28px;background:#696969;border:1px solid #747474"></div><span class="t" style="left:40.05px;top:474.00px;font-size:12px;line-height:12px;transform:scaleX(0.9)">186</span><div class="c" style="left:64px;top:463px;width:29px;height:28px;background:#696969;border:1px solid #747474"></div><span class="t" style="left:70.55px;top:474.00px;font-size:12px;line-height:12px;transform:scaleX(0.9)">187</span><div class="c" style="left:94px;top:463px;width:30px;height:28px;background:#696969;border:1px solid #747474"></div><span class="t" style="left:101.05px;top:474.00px;font-size:12px;line-height:12px;transform:scaleX(0.9)">188</span><div class="c" style="left:125px;top:463px;width:30px;height:28px;background:#696969;border:1px solid #747474"></div><span class="t" style="left:132.05px;top:474.00px;font-size:12px;line-height:12px;transform:scaleX(0.9)">189</span><div class="c" style="left:156px;top:463px;width:29px;height:28px;background:#696969;border:1px solid #747474"></div><span class="t" style="left:162.55px;top:474.00px;font-size:12px;line-height:12px;transform:scaleX(0.9)">190</span><div class="c" style="left:186px;top:463px;width:30px;height:28px;background:#696969;border:1px solid #747474"></div><span class="t" style="left:193.05px;top:474.00px;font-size:12px;line-height:12px;transform:scaleX(0.9)">191</span><div class="c" style="left:217px;top:463px;width:30px;height:28px;background:#696969;border:1px solid #747474"></div><span class="t" style="left:224.05px;top:474.00px;font-size:12px;line-height:12px;transform:scaleX(0.9)">192</span><div class="c" style="left:248px;top:463px;width:30px;height:28px;background:#f0f0f0;border:1px solid #ffffff"></div><span class="t" style="left:255.05px;top:474.00px;font-size:12px;line-height:12px;transform:scaleX(0.9)">249</span><div class="c" style="left:279px;top:463px;width:30px;height:28px;background:#f0f0f0;border:1px solid #ffffff"></div><span class="t" style="left:286.05px;top:474.00px;font-size:12px;line-height:12px;transform:scaleX(0.9)">250</span><div class="c" style="left:310px;top:463px;width:29px;height:28px;background:#f0f0f0;border:1px solid #ffffff"></div><span class="t" style="left:316.55px;top:474.00px;font-size:12px;line-height:12px;transform:scaleX(0.9)">251</span><div class="c" style="left:340px;top:463px;width:30px;height:28px;background:#f0f0f0;border:1px solid #ffffff"></div><span class="t" style="left:347.05px;top:474.00px;font-size:12px;line-height:12px;transform:scaleX(0.9)">252</span><div class="c" style="left:371px;top:463px;width:30px;height:28px;background:#f0f0f0;border:1px solid #ffffff"></div><span class="t" style="left:378.05px;top:474.00px;font-size:12px;line-height:12px;transform:scaleX(0.9)">253</span><div class="c" style="left:402px;top:463px;width:29px;height:28px;background:#f0f0f0;border:1px solid #ffffff"></div><span class="t" style="left:408.55px;top:474.00px;font-size:12px;line-height:12px;transform:scaleX(0.9)">254</span><div class="c" style="left:432px;top:463px;width:30px;height:28px;background:#f0f0f0;border:1px solid #ffffff"></div><span class="t" style="left:439.05px;top:474.00px;font-size:12px;line-height:12px;transform:scaleX(0.9)">255</span><div class="c" style="left:463px;top:463px;width:28px;height:28px;background:#f0f0f0;border:1px solid #ffffff"></div><span class="t" style="left:470.05px;top:474.00px;font-size:12px;line-height:12px;transform:scaleX(0.9)">256</span><div class="c" style="left:1px;top:0;width:1px;height:492px;background:#000"></div><div class="c" style="left:0;top:1px;width:492px;height:1px;background:#000"></div><div class="c" style="left:32px;top:0;width:1px;height:492px;background:#000"></div><div class="c" style="left:0;top:32px;width:492px;height:1px;background:#000"></div><div class="c" style="left:63px;top:0;width:1px;height:492px;background:#000"></div><div class="c" style="left:0;top:63px;width:492px;height:1px;background:#000"></div><div class="c" style="left:93px;top:0;width:1px;height:492px;background:#000"></div><div class="c" style="left:0;top:93px;width:492px;height:1px;background:#000"></div><div class="c" style="left:124px;top:0;width:1px;height:492px;background:#000"></div><div class="c" style="left:0;top:124px;width:492px;height:1px;background:#000"></div><div class="c" style="left:155px;top:0;width:1px;height:492px;background:#000"></div><div class="c" style="left:0;top:155px;width:492px;height:1px;background:#000"></div><div class="c" style="left:185px;top:0;width:1px;height:492px;background:#000"></div><div class="c" style="left:0;top:185px;width:492px;height:1px;background:#000"></div><div class="c" style="left:216px;top:0;width:1px;height:492px;background:#000"></div><div class="c" style="left:0;top:216px;width:492px;height:1px;background:#000"></div><div class="c" style="left:247px;top:0;width:1px;height:492px;background:#000"></div><div class="c" style="left:0;top:247px;width:492px;height:1px;background:#000"></div><div class="c" style="left:278px;top:0;width:1px;height:492px;background:#000"></div><div class="c" style="left:0;top:278px;width:492px;height:1px;background:#000"></div><div class="c" style="left:309px;top:0;width:1px;height:492px;background:#000"></div><div class="c" style="left:0;top:309px;width:492px;height:1px;background:#000"></div><div class="c" style="left:339px;top:0;width:1px;height:492px;background:#000"></div><div class="c" style="left:0;top:339px;width:492px;height:1px;background:#000"></div><div class="c" style="left:370px;top:0;width:1px;height:492px;background:#000"></div><div class="c" style="left:0;top:370px;width:492px;height:1px;background:#000"></div><div class="c" style="left:401px;top:0;width:1px;height:492px;background:#000"></div><div class="c" style="left:0;top:401px;width:492px;height:1px;background:#000"></div><div class="c" style="left:431px;top:0;width:1px;height:492px;background:#000"></div><div class="c" style="left:0;top:431px;width:492px;height:1px;background:#000"></div><div class="c" style="left:462px;top:0;width:1px;height:492px;background:#000"></div><div class="c" style="left:0;top:462px;width:492px;height:1px;background:#000"></div><div class="c" style="left:0;top:0;width:492px;height:492px;border:1px solid #666"></div></div><div style="left:526px;top:81px;width:168px;height:21px;border:1px solid #abadb3;box-sizing:border-box;background:#fff;"></div><div style="left:526px;top:121px;width:168px;height:21px;border:1px solid #abadb3;box-sizing:border-box;background:#fff;"></div><div style="left:527px;top:154px;width:167px;height:208px;border:1px solid #dcdcdc;box-sizing:border-box;"></div><div style="left:534px;top:154px;width:17px;height:1px;background:#f0f0f0"></div><div style="left:533px;top:162px;width:13px;height:13px;border:1px solid #bcbcbc;box-sizing:border-box;background:#e6e6e6;"></div><div style="left:532px;top:190px;width:156px;height:37px;border:1px solid #dcdcdc;box-sizing:border-box;"></div><div style="left:538px;top:190px;width:32px;height:1px;background:#f0f0f0"></div><div style="left:533px;top:239px;width:155px;height:64px;border:1px solid #dcdcdc;box-sizing:border-box;"></div><div style="left:540px;top:239px;width:73px;height:1px;background:#f0f0f0"></div><div style="left:538px;top:253px;width:13px;height:13px;border:1px solid #707070;box-sizing:border-box;background:#fff;"></div><div style="left:625px;top:253px;width:13px;height:13px;border:1px solid #707070;box-sizing:border-box;background:#fff;"></div><div style="left:539px;top:275px;width:143px;height:21px;border:1px solid #abadb3;box-sizing:border-box;background:#fff;"></div><div style="left:533px;top:316px;width:155px;height:40px;border:1px solid #dcdcdc;box-sizing:border-box;"></div><div style="left:539px;top:316px;width:38px;height:1px;background:#f0f0f0"></div><div style="left:561px;top:329px;width:44px;height:20px;border:1px solid #abadb3;box-sizing:border-box;background:#fff;"></div><div style="left:589px;top:331px;width:14px;height:16px;background:linear-gradient(#f2f2f2,#e6e6e6);border:1px solid #b2b2b2;border-top:none;box-sizing:border-box"></div><div style="left:589px;top:338px;width:14px;height:2px;background:#b4b4b4"></div><div style="left:595px;top:333px;width:1px;height:1px;background:#000"></div><div style="left:594px;top:334px;width:3px;height:1px;background:#000"></div><div style="left:593px;top:335px;width:5px;height:1px;background:#000"></div><div style="left:593px;top:341px;width:5px;height:1px;background:#000"></div><div style="left:594px;top:342px;width:3px;height:1px;background:#000"></div><div style="left:595px;top:343px;width:1px;height:1px;background:#000"></div><div style="left:639px;top:329px;width:44px;height:20px;border:1px solid #abadb3;box-sizing:border-box;background:#fff;"></div><div style="left:667px;top:331px;width:14px;height:16px;background:linear-gradient(#f2f2f2,#e6e6e6);border:1px solid #b2b2b2;border-top:none;box-sizing:border-box"></div><div style="left:667px;top:338px;width:14px;height:2px;background:#b4b4b4"></div><div style="left:673px;top:333px;width:1px;height:1px;background:#000"></div><div style="left:672px;top:334px;width:3px;height:1px;background:#000"></div><div style="left:671px;top:335px;width:5px;height:1px;background:#000"></div><div style="left:671px;top:341px;width:5px;height:1px;background:#000"></div><div style="left:672px;top:342px;width:3px;height:1px;background:#000"></div><div style="left:673px;top:343px;width:1px;height:1px;background:#000"></div><div style="left:527px;top:374px;width:167px;height:169px;border:1px solid #dcdcdc;box-sizing:border-box;"></div><div style="left:534px;top:374px;width:64px;height:1px;background:#f0f0f0"></div><div style="left:619px;top:470px;width:69px;height:20px;border:1px solid #abadb3;box-sizing:border-box;background:#fff;"></div><div style="left:619px;top:495px;width:69px;height:20px;border:1px solid #abadb3;box-sizing:border-box;background:#fff;"></div><div style="left:619px;top:518px;width:69px;height:20px;border:1px solid #abadb3;box-sizing:border-box;background:#fff;"></div><div style="left:527px;top:549px;width:85px;height:21px;border:1px solid #acacac;box-sizing:border-box;background:linear-gradient(#f0f0f0,#e5e5e5)"></div><div style="left:620px;top:549px;width:73px;height:21px;border:1px solid #acacac;box-sizing:border-box;background:linear-gradient(#f0f0f0,#e5e5e5)"></div><span class="t" style="left:335.02px;top:10px;font-size:16px;line-height:16px;color:#000;transform:scaleX(0.976)">Matrix</span><span class="t" style="left:21.03px;top:42px;font-size:12px;line-height:12px;color:#000;transform:scaleX(0.968)">Rows:</span><span class="t" style="left:112.12px;top:42px;font-size:12px;line-height:12px;color:#000;transform:scaleX(0.878)">Columns:</span><span class="t" style="left:225.08px;top:42px;font-size:12px;line-height:12px;color:#000;transform:scaleX(0.915)">Monochrome:</span><span class="t" style="left:64.08px;top:42px;font-size:12px;line-height:12px;color:#000;transform:scaleX(0.917)">16</span><span class="t" style="left:161.08px;top:42px;font-size:12px;line-height:12px;color:#000;transform:scaleX(0.917)">16</span><span class="t" style="left:30.12px;top:64px;font-size:12px;line-height:12px;color:#000;transform:scaleX(0.875)">Matrix</span><span class="t" style="left:536.00px;top:66px;font-size:12px;line-height:12px;color:#000;transform:scaleX(0.851)">Visualisation</span><span class="t" style="left:529.13px;top:85px;font-size:12px;line-height:12px;color:#000;transform:scaleX(0.868)">Nummeric</span><span class="t" style="left:535.14px;top:107px;font-size:12px;line-height:12px;color:#000;transform:scaleX(0.862)">Colorsystem</span><span class="t" style="left:529.12px;top:125px;font-size:12px;line-height:12px;color:#000;transform:scaleX(0.880)">RGB</span><span class="t" style="left:535.21px;top:149px;font-size:12px;line-height:12px;color:#000;transform:scaleX(0.786)">Fill</span><span class="t" style="left:552.00px;top:163px;font-size:12px;line-height:12px;color:#a3a3a3;transform:scaleX(0.875)">Auto</span><span class="t" style="left:540.00px;top:186px;font-size:12px;line-height:12px;color:#000;transform:scaleX(0.903)">Order</span><span class="t" style="left:557.14px;top:206px;font-size:12px;line-height:12px;color:#000;transform:scaleX(0.865)">Normal</span><span class="t" style="left:643.06px;top:206px;font-size:12px;line-height:12px;color:#000;transform:scaleX(0.939)">Snake</span><span class="t" style="left:541.08px;top:235px;font-size:12px;line-height:12px;color:#000;transform:scaleX(0.920)">Mirror / Rotate</span><span class="t" style="left:556.10px;top:254px;font-size:12px;line-height:12px;color:#000;transform:scaleX(0.904)">Horizontal</span><span class="t" style="left:644.00px;top:254px;font-size:12px;line-height:12px;color:#000;transform:scaleX(0.897)">Vertical</span><span class="t" style="left:542.00px;top:279px;font-size:12px;line-height:12px;color:#000;transform:scaleX(1.000)">0°</span><span class="t" style="left:541.14px;top:311px;font-size:12px;line-height:12px;color:#000;transform:scaleX(0.865)">Cluster</span><span class="t" style="left:542.00px;top:332px;font-size:12px;line-height:12px;color:#000;transform:scaleX(1.000)">X:</span><span class="t" style="left:561.60px;top:332px;font-size:12px;line-height:12px;color:#000;transform:scaleX(1.400)">2</span><span class="t" style="left:619.00px;top:332px;font-size:12px;line-height:12px;color:#000;transform:scaleX(1.000)">Y:</span><span class="t" style="left:639.60px;top:332px;font-size:12px;line-height:12px;color:#000;transform:scaleX(1.400)">2</span><span class="t" style="left:535.13px;top:369px;font-size:12px;line-height:12px;color:#000;transform:scaleX(0.868)">Current Pixel</span><span class="t" style="left:634.94px;top:394px;font-size:16px;line-height:16px;color:#000;transform:scaleX(1.061)">RGB</span><span class="t" style="left:626.09px;top:446px;font-size:14px;line-height:14px;color:#000;transform:scaleX(0.911)">Index: 10</span><span class="t" style="left:574.00px;top:474px;font-size:12px;line-height:12px;color:#000;transform:scaleX(1.000)">Red:</span><span class="t" style="left:574.09px;top:500px;font-size:12px;line-height:12px;color:#000;transform:scaleX(0.914)">Green:</span><span class="t" style="left:574.04px;top:526px;font-size:12px;line-height:12px;color:#000;transform:scaleX(0.960)">Blue:</span><span class="t" style="left:621.00px;top:474px;font-size:12px;line-height:12px;color:#000;transform:scaleX(1.000)">28</span><span class="t" style="left:621.00px;top:499px;font-size:12px;line-height:12px;color:#000;transform:scaleX(1.000)">29</span><span class="t" style="left:621.00px;top:523px;font-size:12px;line-height:12px;color:#000;transform:scaleX(1.000)">30</span><span class="t" style="left:552.09px;top:554px;font-size:12px;line-height:12px;color:#000;transform:scaleX(0.912)">Ready</span><span class="t" style="left:637.06px;top:554px;font-size:12px;line-height:12px;color:#000;transform:scaleX(0.944)">Cancle</span>
<svg style="position:absolute;left:0;top:0" width="713" height="589"><path d="M688.3 9.3 L695.7 16.7 M695.7 9.3 L688.3 16.7" stroke="#fff" stroke-width="1.9"/><path d="M682.3 89.5 L685.5 94.1 L688.7 89.5" fill="none" stroke="#4a4a4a" stroke-width="1.9"/><path d="M682.3 129.5 L685.5 134.1 L688.7 129.5" fill="none" stroke="#4a4a4a" stroke-width="1.9"/><path d="M535.8 168 L539 171.3 L543.8 164.8" fill="none" stroke="#6f6f6f" stroke-width="2"/><circle cx="544.5" cy="211.5" r="6" fill="#fff" stroke="#5a5a5a" stroke-width="1"/><circle cx="544.5" cy="211.5" r="3.5" fill="#222"/><circle cx="631.5" cy="211.5" r="6" fill="#fff" stroke="#5a5a5a" stroke-width="1"/><path d="M670.3 283.5 L673.5 288.1 L676.7 283.5" fill="none" stroke="#4a4a4a" stroke-width="1.9"/><defs><filter id="sh" x="-20%" y="-20%" width="140%" height="140%"><feOffset in="SourceAlpha" dx="3" dy="3" result="o"/><feGaussianBlur in="o" stdDeviation="2.8" result="b"/><feComposite in="SourceAlpha" in2="b" operator="out" result="e"/><feFlood flood-color="#fff" flood-opacity="0.55"/><feComposite in2="e" operator="in" result="h"/><feMerge><feMergeNode in="SourceGraphic"/><feMergeNode in="h"/></feMerge></filter><clipPath id="cG"><circle cx="572.8" cy="414.3" r="23.3" /></clipPath><clipPath id="cB"><circle cx="558.4" cy="436.3" r="23.3" /></clipPath><clipPath id="cR"><circle cx="586.9" cy="436.3" r="23.3" /></clipPath><mask id="mg" maskUnits="userSpaceOnUse" x="520" y="380" width="110" height="90"><rect x="520" y="380" width="110" height="90" fill="#fff"/><circle cx="558.4" cy="436.3" r="24.1" fill="#000"/><circle cx="586.9" cy="436.3" r="24.1" fill="#000"/></mask><mask id="mb" maskUnits="userSpaceOnUse" x="520" y="380" width="110" height="90"><rect x="520" y="380" width="110" height="90" fill="#fff"/><circle cx="572.8" cy="414.3" r="24.1" fill="#000"/><circle cx="586.9" cy="436.3" r="24.1" fill="#000"/></mask><mask id="mr" maskUnits="userSpaceOnUse" x="520" y="380" width="110" height="90"><rect x="520" y="380" width="110" height="90" fill="#fff"/><circle cx="572.8" cy="414.3" r="24.1" fill="#000"/><circle cx="558.4" cy="436.3" r="24.1" fill="#000"/></mask><mask id="mc" maskUnits="userSpaceOnUse" x="520" y="380" width="110" height="90"><rect x="520" y="380" width="110" height="90" fill="#fff"/><circle cx="586.9" cy="436.3" r="24.1" fill="#000"/></mask><mask id="my" maskUnits="userSpaceOnUse" x="520" y="380" width="110" height="90"><rect x="520" y="380" width="110" height="90" fill="#fff"/><circle cx="558.4" cy="436.3" r="24.1" fill="#000"/></mask><mask id="mm" maskUnits="userSpaceOnUse" x="520" y="380" width="110" height="90"><rect x="520" y="380" width="110" height="90" fill="#fff"/><circle cx="572.8" cy="414.3" r="24.1" fill="#000"/></mask><mask id="mw" maskUnits="userSpaceOnUse" x="520" y="380" width="110" height="90"><rect x="520" y="380" width="110" height="90" fill="#fff"/></mask></defs><g filter="url(#sh)"><g mask="url(#mg)"><circle cx="572.8" cy="414.3" r="22.8" fill="#00ff00"/></g></g><g filter="url(#sh)"><g mask="url(#mb)"><circle cx="558.4" cy="436.3" r="22.8" fill="#0000ff"/></g></g><g filter="url(#sh)"><g mask="url(#mr)"><circle cx="586.9" cy="436.3" r="22.8" fill="#ff0000"/></g></g><g filter="url(#sh)"><g mask="url(#mc)"><g clip-path="url(#cB)"><circle cx="572.8" cy="414.3" r="22.8" fill="#00ffff"/></g></g></g><g filter="url(#sh)"><g mask="url(#my)"><g clip-path="url(#cR)"><circle cx="572.8" cy="414.3" r="22.8" fill="#ffff00"/></g></g></g><g filter="url(#sh)"><g mask="url(#mm)"><g clip-path="url(#cR)"><circle cx="558.4" cy="436.3" r="22.8" fill="#ff00ff"/></g></g></g><g filter="url(#sh)"><g mask="url(#mw)"><g clip-path="url(#cR)"><g clip-path="url(#cB)"><circle cx="572.8" cy="414.3" r="22.8" fill="#ffffff"/></g></g></g></g><circle cx="571.9" cy="413.40000000000003" r="23.5" fill="none" stroke="#8c8c8c" stroke-width="1.7" stroke-opacity="0.9"/><circle cx="557.5" cy="435.40000000000003" r="23.5" fill="none" stroke="#8c8c8c" stroke-width="1.7" stroke-opacity="0.9"/><circle cx="586.0" cy="435.40000000000003" r="23.5" fill="none" stroke="#8c8c8c" stroke-width="1.7" stroke-opacity="0.9"/><circle cx="573.15" cy="414.65000000000003" r="23.3" fill="none" stroke="#2e2e2e" stroke-width="1.25"/><circle cx="558.75" cy="436.65000000000003" r="23.3" fill="none" stroke="#2e2e2e" stroke-width="1.25"/><circle cx="587.25" cy="436.65000000000003" r="23.3" fill="none" stroke="#2e2e2e" stroke-width="1.25"/></svg>
</body></html>
